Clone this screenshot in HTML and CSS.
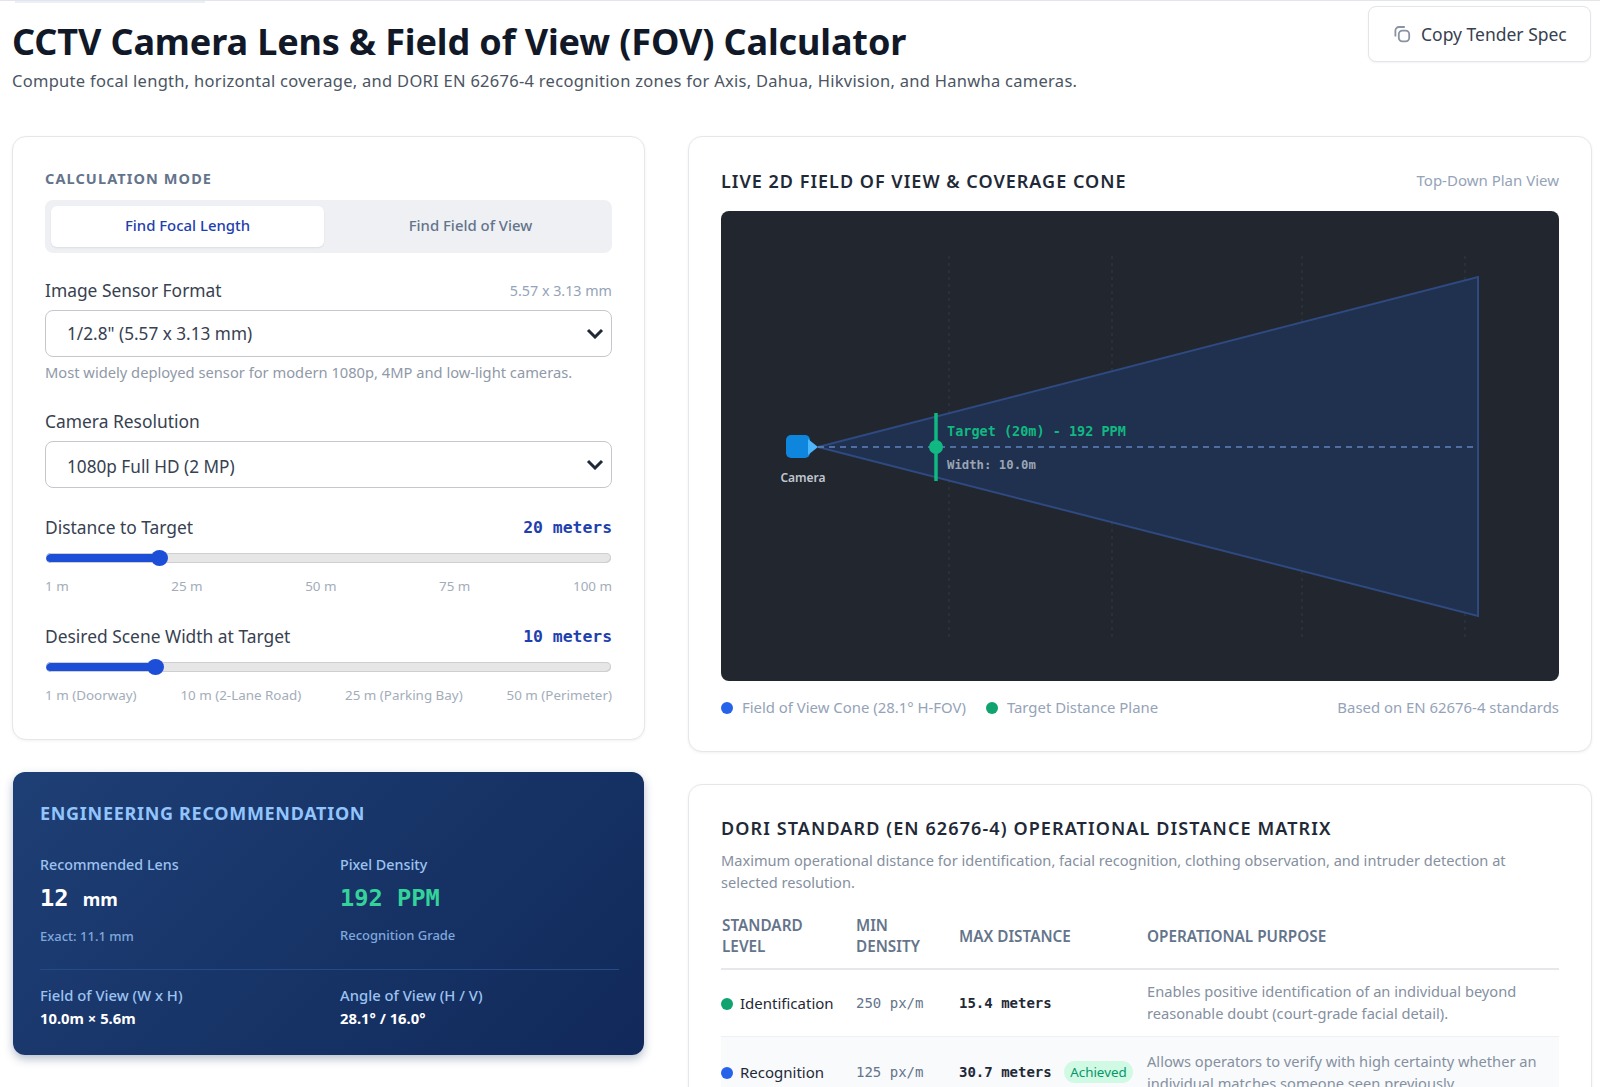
FILE: index.html
```html
<!DOCTYPE html>
<html>
<head>
	<title>CCTV Camera Lens &amp; Field of View (FOV) Calculator</title>
	<link rel="stylesheet" href="styles.css">
</head>
<body>
<div class="top-strip"><div class="top-badge"></div></div>

<header class="page-head">
  <div>
    <h1>CCTV Camera Lens &amp; Field of View (FOV) Calculator</h1>
    <p class="subtitle">Compute focal length, horizontal coverage, and DORI EN 62676-4 recognition zones for Axis, Dahua, Hikvision, and Hanwha cameras.</p>
  </div>
  <button class="copy-btn">
    <svg class="copy-icon" viewBox="0 0 18 18" fill="none" stroke="#8a93a3" stroke-width="1.8">
      <rect x="5.8" y="5.6" width="10.4" height="10.8" rx="3.6"/>
      <path d="M2.4 11.4V5.6a3.6 3.6 0 0 1 3.6-3.6h5.8"/>
    </svg>
    Copy Tender Spec
  </button>
</header>

<main class="layout">
  <div class="col-left">
    <section class="card controls">
      <div class="mode-title">CALCULATION MODE</div>
      <div class="mode-toggle">
        <div class="mode-btn active">Find Focal Length</div>
        <div class="mode-btn">Find Field of View</div>
      </div>

      <div class="field-head sensor-head">
        <label>Image Sensor Format</label>
        <span class="field-note">5.57 x 3.13 mm</span>
      </div>
      <div class="picker-wrap">
        <select class="picker">
          <option>1/2.8" (5.57 x 3.13 mm)</option>
        </select>
        <svg class="chevron" viewBox="0 0 18 11" fill="none" stroke="#1f2937" stroke-width="3"><path d="M2 2l7 7 7-7"/></svg>
      </div>
      <p class="helper">Most widely deployed sensor for modern 1080p, 4MP and low-light cameras.</p>

      <div class="field-head resolution-head">
        <label>Camera Resolution</label>
      </div>
      <div class="picker-wrap">
        <select class="picker picker-low">
          <option>1080p Full HD (2 MP)</option>
        </select>
        <svg class="chevron" viewBox="0 0 18 11" fill="none" stroke="#1f2937" stroke-width="3"><path d="M2 2l7 7 7-7"/></svg>
      </div>

      <div class="field-head distance-head">
        <label>Distance to Target</label>
        <span class="field-value">20 meters</span>
      </div>
      <input class="slider" type="range" min="1" max="100" value="20" style="--fill: 20.5%">
      <div class="ticks">
        <span>1 m</span><span>25 m</span><span>50 m</span><span>75 m</span><span>100 m</span>
      </div>

      <div class="field-head width-head">
        <label>Desired Scene Width at Target</label>
        <span class="field-value">10 meters</span>
      </div>
      <input class="slider" type="range" min="1" max="50" value="10" style="--fill: 19.6%">
      <div class="ticks">
        <span>1 m (Doorway)</span><span>10 m (2-Lane Road)</span><span>25 m (Parking Bay)</span><span>50 m (Perimeter)</span>
      </div>
    </section>

    <section class="reco">
      <h2>ENGINEERING RECOMMENDATION</h2>
      <div class="reco-grid">
        <div>
          <div class="reco-label">Recommended Lens</div>
          <div class="reco-big">12 <small>mm</small></div>
          <div class="reco-sub">Exact: 11.1 mm</div>
        </div>
        <div>
          <div class="reco-label">Pixel Density</div>
          <div class="reco-big green">192 PPM</div>
          <div class="reco-sub">Recognition Grade</div>
        </div>
      </div>
      <div class="reco-grid reco-lower">
        <div>
          <div class="reco-label">Field of View (W x H)</div>
          <div class="reco-val">10.0m × 5.6m</div>
        </div>
        <div>
          <div class="reco-label">Angle of View (H / V)</div>
          <div class="reco-val">28.1° / 16.0°</div>
        </div>
      </div>
    </section>
  </div>

  <div class="col-right">
    <section class="card view-card">
      <div class="card-head">
        <h2>LIVE 2D FIELD OF VIEW &amp; COVERAGE CONE</h2>
        <span class="card-note">Top-Down Plan View</span>
      </div>
      <svg class="canvas" viewBox="0 0 838 470" width="838" height="470">
        <g stroke="#343944" stroke-width="1" stroke-dasharray="3 4">
          <line x1="228" y1="45" x2="228" y2="428"/>
          <line x1="391" y1="45" x2="391" y2="428"/>
          <line x1="581" y1="45" x2="581" y2="428"/>
          <line x1="744" y1="45" x2="744" y2="428"/>
        </g>
        <polygon points="97,236 757,66 757,405" fill="#20304f" stroke="#2e4a80" stroke-width="2"/>
        <line x1="97" y1="236" x2="757" y2="236" stroke="#5f83bf" stroke-width="1.5" stroke-dasharray="6 5"/>
        <line x1="215" y1="202" x2="215" y2="270" stroke="#10b981" stroke-width="3.5"/>
        <circle cx="215" cy="236" r="7" fill="#10b981"/>
        <text class="svg-target" x="226" y="225">Target (20m) - 192 PPM</text>
        <text class="svg-width" x="226" y="258">Width: 10.0m</text>
        <rect x="65" y="224" width="24" height="23" rx="5" fill="#0f86de"/>
        <polygon points="87,228 97,236 87,244" fill="#4db5fb"/>
        <text class="svg-camera" x="82" y="271" text-anchor="middle">Camera</text>
      </svg>
      <div class="legend">
        <span class="legend-item"><i class="dot blue"></i>Field of View Cone (28.1° H-FOV)</span>
        <span class="legend-item"><i class="dot emerald"></i>Target Distance Plane</span>
        <span class="legend-note">Based on EN 62676-4 standards</span>
      </div>
    </section>

    <section class="card dori-card">
      <h2>DORI STANDARD (EN 62676-4) OPERATIONAL DISTANCE MATRIX</h2>
      <p class="dori-desc">Maximum operational distance for identification, facial recognition, clothing observation, and intruder detection at selected resolution.</p>
      <table class="dori">
        <colgroup>
          <col class="c-level"><col class="c-density"><col class="c-dist"><col>
        </colgroup>
        <thead>
          <tr>
            <th>STANDARD<br>LEVEL</th>
            <th>MIN<br>DENSITY</th>
            <th>MAX DISTANCE</th>
            <th>OPERATIONAL PURPOSE</th>
          </tr>
        </thead>
        <tbody>
          <tr>
            <td class="level"><i class="dot emerald"></i>Identification</td>
            <td class="mono">250 px/m</td>
            <td class="mono strong">15.4 meters</td>
            <td class="purpose">Enables positive identification of an individual beyond reasonable doubt (court-grade facial detail).</td>
          </tr>
          <tr class="current">
            <td class="level"><i class="dot blue"></i>Recognition</td>
            <td class="mono">125 px/m</td>
            <td class="mono strong">30.7 meters <span class="achieved">Achieved</span></td>
            <td class="purpose">Allows operators to verify with high certainty whether an individual matches someone seen previously.</td>
          </tr>
        </tbody>
      </table>
    </section>
  </div>
</main>
</body>
</html>
```

FILE: styles.css
```css
html, body {
  height: 1087px;
  overflow: hidden;
}

body {
  margin: 0;
  background: #fff;
  color: #1f2937;
  font-family: "Noto Sans", "Open Sans", sans-serif;
}

.top-strip {
  height: 2px;
  border-top: 1px solid #e2e5ea;
}

.top-badge {
  width: 190px;
  height: 2px;
  margin-left: 15px;
  background: #eceff8;
}

/* HEADER */
.page-head {
  display: flex;
  justify-content: space-between;
  align-items: flex-start;
  padding: 3px 9px 0 12px;
}

h1 {
  margin: 14px 0 0;
  font-size: 36px;
  line-height: 44px;
  font-weight: 700;
  letter-spacing: -0.12px;
  color: #111827;
}

.subtitle {
  margin: 6px 0 0;
  font-size: 16.5px;
  line-height: 22px;
  letter-spacing: .28px;
  color: #4b5563;
}

.copy-btn {
  display: flex;
  align-items: center;
  gap: 10px;
  width: 223px;
  height: 56px;
  padding: 0 0 0 24px;
  background: #fff;
  border: 1.5px solid #e2e5ea;
  border-radius: 8px;
  font: 400 17.5px "Noto Sans", sans-serif;
  color: #374151;
  box-shadow: 0 1px 2px rgba(0,0,0,.05);
}

.copy-icon {
  width: 18px;
  height: 18px;
}

/* MAIN GRID */
.layout {
  display: grid;
  grid-template-columns: 633px 904px;
  gap: 43px;
  padding: 44px 0 0 12px;
}

.col-left, .col-right {
  display: flex;
  flex-direction: column;
  gap: 32px;
}

.card {
  box-sizing: border-box;
  background: #fff;
  border: 1.5px solid #e5e7eb;
  border-radius: 14px;
  box-shadow: 0 1px 3px rgba(0,0,0,.06);
}

/* CONTROLS */
.controls {
  height: 604px;
  padding: 31px 32px 0;
}

.mode-title {
  font-size: 14.5px;
  line-height: 20px;
  font-weight: 700;
  letter-spacing: 1.1px;
  color: #64748b;
}

.mode-toggle {
  display: flex;
  height: 53px;
  box-sizing: border-box;
  padding: 6px;
  margin-top: 12px;
  background: #eef0f4;
  border-radius: 8px;
}

.mode-btn {
  flex: 1;
  display: flex;
  align-items: center;
  justify-content: center;
  padding: 0 0 3px 11px;
  font-size: 14.9px;
  font-weight: 500;
  color: #64748b;
  border-radius: 6px;
}

.mode-btn.active {
  flex: 0 0 273px;
  padding-left: 0;
  background: #fff;
  color: #1e40af;
  box-shadow: 0 1px 2px rgba(0,0,0,.08);
}

.field-head {
  display: flex;
  justify-content: space-between;
  align-items: center;
  height: 24px;
  font-size: 17.4px;
  color: #374151;
}

.sensor-head { margin-top: 25px; }
.resolution-head { margin-top: 27px; }
.distance-head { margin-top: 27px; }
.width-head { margin-top: 29px; margin-bottom: 1px; }

.field-note {
  font-size: 14.3px;
  color: #94a3b8;
}

.field-value {
  font-family: "DejaVu Sans Mono", monospace;
  font-size: 16.4px;
  font-weight: 700;
  color: #1e40af;
}

.picker-wrap {
  position: relative;
  margin-top: 8px;
}

.picker {
  display: block;
  width: 100%;
  height: 47px;
  padding: 0 21px;
  appearance: none;
  -webkit-appearance: none;
  background: #fff;
  border: 1.5px solid #c4c7cc;
  border-radius: 8px;
  font: 17.2px "Noto Sans", sans-serif;
  color: #374151;
}

.picker-low {
  padding-top: 3px;
}

.chevron {
  position: absolute;
  right: 8px;
  top: 18px;
  width: 18px;
  height: 11px;
}

.helper {
  margin: 5px 0 0;
  font-size: 14.7px;
  line-height: 20px;
  color: #8f99a8;
}

.slider {
  display: block;
  width: 565px;
  height: 16px;
  margin: 11px 0 0 1px;
  appearance: none;
  -webkit-appearance: none;
  background: transparent;
}

.slider::-webkit-slider-runnable-track {
  height: 10px;
  border-radius: 5px;
  background: linear-gradient(to right, #1d4ed8 var(--fill), #e6e6e6 var(--fill));
  box-shadow: inset -1px -1px 0 #cfcfcf, inset 0 1px 0 #cfcfcf;
}

.slider::-webkit-slider-thumb {
  -webkit-appearance: none;
  width: 17px;
  height: 16px;
  margin-top: -3px;
  border-radius: 50%;
  background: #1d4ed8;
}

.ticks {
  display: flex;
  justify-content: space-between;
  margin-top: 11px;
  font-size: 13.4px;
  line-height: 18px;
  color: #a3adba;
}

/* RECOMMENDATION */
.reco {
  box-sizing: border-box;
  height: 283px;
  margin-left: 1px;
  margin-right: 1px;
  padding: 28px 25px 0 27px;
  background: linear-gradient(135deg, #1e3f75, #11295a);
  border-radius: 12px;
  box-shadow: 0 4px 10px rgba(15,42,90,.3);
}

.reco h2 {
  margin: 0;
  font-size: 18px;
  line-height: 26px;
  font-weight: 700;
  letter-spacing: .7px;
  color: #93c5fd;
}

.reco-grid {
  display: grid;
  grid-template-columns: 300px 1fr;
  margin-top: 29px;
  padding-bottom: 24px;
  border-bottom: 1px solid #254a8a;
}

.reco-lower {
  margin-top: 15px;
  border-bottom: 0;
  padding-bottom: 0;
}

.reco-label {
  font-size: 14.3px;
  line-height: 20px;
  font-weight: 500;
  color: #9cc3f0;
}

.reco-lower .reco-label {
  font-size: 14.8px;
}

.reco-big {
  margin-top: 8px;
  font-family: "DejaVu Sans Mono", monospace;
  font-size: 23.7px;
  line-height: 30px;
  font-weight: 700;
  color: #fff;
}

.reco-big small {
  font-size: 18px;
  font-family: "Noto Sans", sans-serif;
}

.reco-big.green {
  color: #34d399;
}

.reco-sub {
  margin-top: 13px;
  font-size: 13px;
  line-height: 18px;
  font-weight: 500;
  color: #7fa8dd;
}

.reco-val {
  margin-top: 3px;
  font-size: 14.8px;
  line-height: 20px;
  font-weight: 700;
  color: #fff;
}

/* VIEW CARD */
.view-card {
  height: 616px;
  padding: 27px 32px 0;
}

.card-head {
  display: flex;
  justify-content: space-between;
  align-items: center;
  height: 32px;
  margin-bottom: 15px;
}

h2 {
  font-size: 18px;
  font-weight: 600;
  letter-spacing: 1px;
  color: #1f2937;
}

.card-head h2 {
  margin: 2px 0 0;
}

.card-note {
  font-size: 15px;
  color: #94a3b8;
}

.canvas {
  display: block;
  background: #22262f;
  border-radius: 8px;
}

.svg-target {
  font: 700 13.5px "DejaVu Sans Mono", monospace;
  fill: #10b981;
}

.svg-width {
  font: 700 12.3px "DejaVu Sans Mono", monospace;
  fill: #9aa5b4;
}

.svg-camera {
  font: 600 12px "Noto Sans", sans-serif;
  fill: #c1c7d0;
}

.legend {
  display: flex;
  align-items: center;
  gap: 20px;
  margin-top: 15px;
  font-size: 14.9px;
  line-height: 22px;
  color: #94a3b8;
}

.legend-note {
  margin-left: auto;
}

.dot {
  display: inline-block;
  width: 12px;
  height: 12px;
  margin-right: 9px;
  border-radius: 50%;
  vertical-align: -1px;
}

.dot.blue { background: #2563eb; }
.dot.emerald { background: #10a36f; }

/* DORI TABLE */
.dori-card {
  padding: 30px 32px 0;
}

.dori-card h2 {
  margin: 0;
  line-height: 26px;
  letter-spacing: 1.1px;
}

.dori-desc {
  margin: 9px 0 0;
  font-size: 14.6px;
  line-height: 21.5px;
  color: #8590a0;
}

table.dori {
  width: 838px;
  margin-top: 22px;
  border-collapse: collapse;
  table-layout: fixed;
}

.c-level { width: 135px; }
.c-density { width: 103px; }
.c-dist { width: 188px; }

.dori th {
  padding: 0 1px 11px 0;
  text-align: left;
  font-size: 15.3px;
  line-height: 21px;
  font-weight: 600;
  color: #64748b;
  border-bottom: 2px solid #e5e7eb;
}

.dori th:first-child {
  padding-left: 1px;
}

.dori td {
  padding: 11px 0;
  font-size: 15px;
  line-height: 22px;
  border-bottom: 1px solid #eef0f3;
}

.dori .current td {
  padding-top: 11px;
  background: #f8fafc;
}

.dori td.purpose {
  padding: 10px 0 12px;
  font-size: 14.65px;
  color: #8590a0;
}

.dori .current td.purpose {
  padding-top: 13px;
}

.level { color: #1f2937; white-space: nowrap; }

.level .dot {
  margin-right: 7px;
}

.mono {
  font-family: "DejaVu Sans Mono", monospace;
  color: #64748b;
}

.dori td.mono { font-size: 14px; }

.strong {
  font-weight: 700;
  color: #1f2937;
  white-space: nowrap;
}

.achieved {
  display: inline-block;
  margin-left: 4px;
  padding: 2px 6px;
  background: #d1fae5;
  border-radius: 12px;
  font: 13.4px "Noto Sans", sans-serif;
  color: #059669;
}
```
